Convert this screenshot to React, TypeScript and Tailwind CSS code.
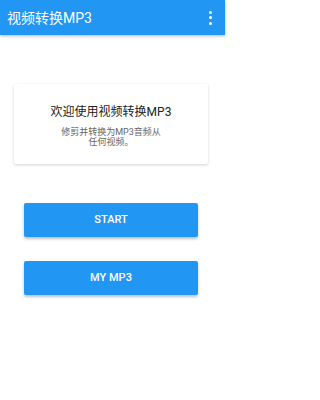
import React from "react";

const font = { fontFamily: "Roboto, 'Noto Sans CJK SC', sans-serif" };

export default function App() {
  return (
    <div className="w-[225px] h-[400px] bg-white flex flex-col" style={font}>
      {/* App bar */}
      <div className="h-[35px] bg-[#2196f3] flex items-center justify-between pl-[7px] pr-[13px] shadow-[0_1px_3px_rgba(0,0,0,0.3)] shrink-0">
        <span className="text-white text-[14px] leading-none">视频转换MP3</span>
        <div className="flex flex-col gap-[2.5px]">
          <span className="w-[3px] h-[3px] rounded-full bg-white" />
          <span className="w-[3px] h-[3px] rounded-full bg-white" />
          <span className="w-[3px] h-[3px] rounded-full bg-white" />
        </div>
      </div>

      {/* Welcome card */}
      <div className="ml-[14px] w-[194px] mt-[49px] h-[80px] bg-white rounded-[2px] shadow-[0_1px_3px_rgba(0,0,0,0.18)] flex flex-col items-center pt-[22px]">
        <div className="text-[12px] text-[#222] leading-none">欢迎使用视频转换MP3</div>
        <div className="mt-[9px] text-[9px] text-[#666] leading-[10px] text-center max-w-[100px]">
          修剪并转换为MP3音频从任何视频。
        </div>
      </div>

      {/* Buttons */}
      <div className="flex flex-col gap-[24px] mt-[39px] ml-[24px] w-[174px]">
        <button className="h-[34px] bg-[#2196f3] text-white text-[11px] font-medium rounded-[2px] shadow-[0_2px_3px_rgba(0,0,0,0.25)]">
          START
        </button>
        <button className="h-[34px] bg-[#2196f3] text-white text-[11px] font-medium rounded-[2px] shadow-[0_2px_3px_rgba(0,0,0,0.25)]">
          MY MP3
        </button>
      </div>
    </div>
  );
}
